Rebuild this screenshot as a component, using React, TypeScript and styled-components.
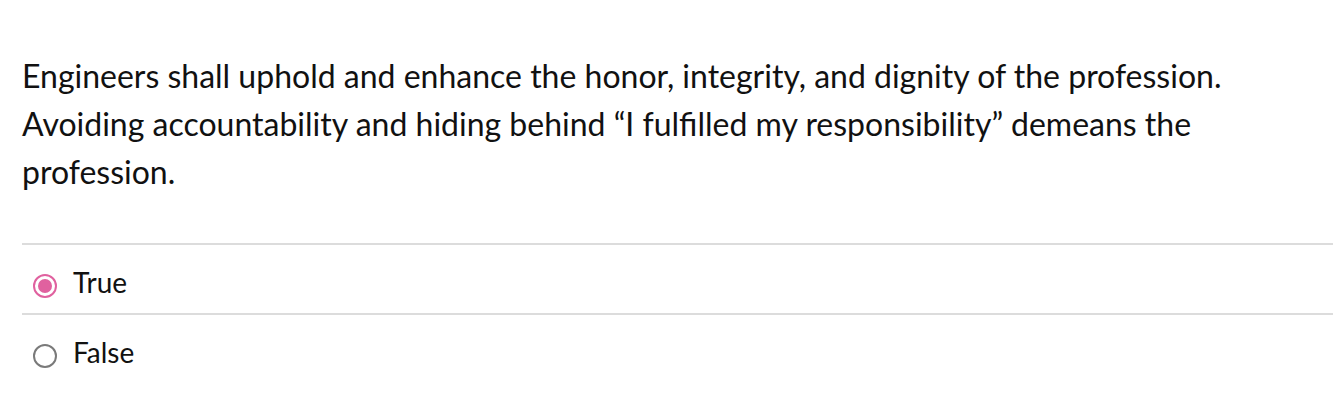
import React from "react";
import styled, { createGlobalStyle } from "styled-components";

const Global = createGlobalStyle`
  html, body { margin: 0; padding: 0; background: #ffffff; }
  body { font-family: Lato, "Noto Sans", sans-serif; color: #111111; }
`;

const Page = styled.div`
  padding: 52px 7px 0 22px;
`;

const Question = styled.p`
  margin: 0 0 47px 0;
  font-size: 32px;
  line-height: 48px;
  color: #111111;
`;

const Options = styled.div`
  display: flex;
  flex-direction: column;
`;

const Option = styled.label`
  display: flex;
  align-items: flex-start;
  gap: 16px;
  border-top: 2px solid #dcdcdc;
  padding: 19px 0 13px 11px;
  font-size: 28px;
  line-height: 36px;
  color: #111111;
  cursor: pointer;
`;

const Radio = styled.span<{ $checked?: boolean }>`
  box-sizing: border-box;
  flex: none;
  margin-top: 10px;
  width: 24px;
  height: 24px;
  border-radius: 50%;
  border: 2px solid ${(p) => (p.$checked ? "#e0619f" : "#7a7a7a")};
  display: flex;
  align-items: center;
  justify-content: center;
  &::after {
    content: "";
    width: 14px;
    height: 14px;
    border-radius: 50%;
    background: #e0619f;
    display: ${(p) => (p.$checked ? "block" : "none")};
  }
`;

export default function App() {
  return (
    <>
      <Global />
      <Page>
        <Question>
          Engineers shall uphold and enhance the honor, integrity, and dignity of the profession.
          <br />
          Avoiding accountability and hiding behind “I fulfilled my responsibility” demeans the
          <br />
          profession.
        </Question>
        <Options>
          <Option>
            <Radio $checked />
            True
          </Option>
          <Option>
            <Radio />
            False
          </Option>
        </Options>
      </Page>
    </>
  );
}
